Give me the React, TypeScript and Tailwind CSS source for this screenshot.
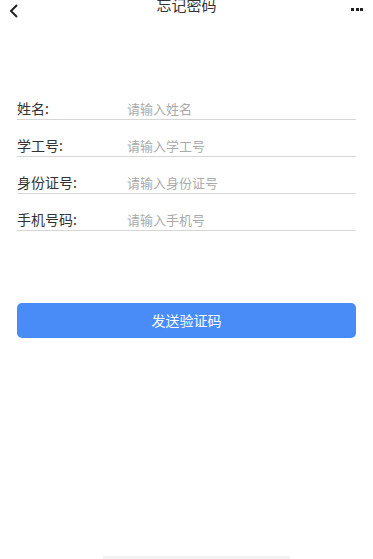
import React from "react";

const rows = [
  { label: "姓名:", ph: "请输入姓名" },
  { label: "学工号:", ph: "请输入学工号" },
  { label: "身份证号:", ph: "请输入身份证号" },
  { label: "手机号码:", ph: "请输入手机号" },
];

export default function App() {
  return (
    <div
      className="w-[373px] h-[559px] bg-white flex flex-col overflow-hidden"
      style={{ fontFamily: '"Noto Sans CJK SC", "Noto Sans", sans-serif' }}
    >
      <div className="h-[30px] -mt-[10px] flex items-center justify-between px-[8px] relative shrink-0">
        <svg width="12" height="14" viewBox="0 0 12 14" className="mt-[12px]">
          <path d="M9 1 L3 7 L9 13" fill="none" stroke="#222" strokeWidth="2" />
        </svg>
        <div className="absolute left-0 right-0 text-center text-[15px] text-[#333] leading-[30px] pointer-events-none">
          忘记密码
        </div>
        <div className="flex gap-[1.5px] mr-[2px] mt-[9px]">
          <span className="w-[3px] h-[3px] bg-[#222]" />
          <span className="w-[3px] h-[3px] bg-[#222]" />
          <span className="w-[3px] h-[3px] bg-[#222]" />
        </div>
      </div>

      <div className="mt-[63px] px-[17px] flex flex-col">
        {rows.map((r) => (
          <div
            key={r.label}
            className="h-[37px] flex items-end border-b border-[#d6d6d6]"
          >
            <span className="w-[110px] text-[14px] leading-[21px] text-[#333]">
              {r.label}
            </span>
            <span className="text-[13px] leading-[21px] text-[#aaaaaa]">
              {r.ph}
            </span>
          </div>
        ))}
      </div>

      <div className="px-[17px] mt-[72px]">
        <button className="w-full h-[35px] rounded-[5px] bg-[#4a8cf7] text-white text-[14px] flex items-center justify-center">
          发送验证码
        </button>
      </div>

      <div className="mt-auto flex pl-[103px]">
        <div className="w-[187px] h-[3px] bg-[#f2f2f2]" />
      </div>
    </div>
  );
}
